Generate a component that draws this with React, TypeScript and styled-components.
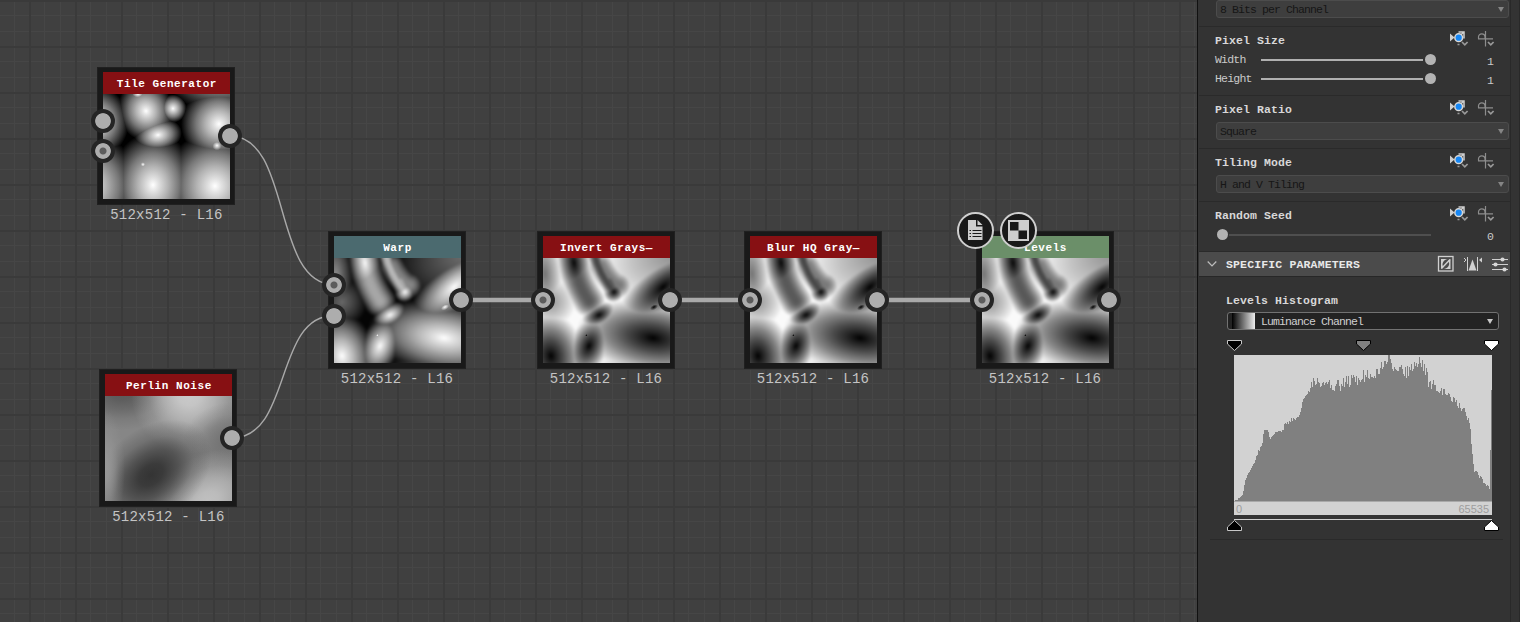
import React from "react";
import styled, { createGlobalStyle } from "styled-components";

const GlobalStyle = createGlobalStyle`
  * { box-sizing: border-box; }
  html, body { margin: 0; padding: 0; }
  body { background: #404040; overflow: hidden; }
`;

const mono = `"Liberation Mono", monospace`;

const Shell = styled.div`
  display: flex;
  width: 1520px;
  height: 622px;
  overflow: hidden;
  font-family: ${mono};
`;

/* ---------- graph canvas ---------- */

const Canvas = styled.main`
  position: relative;
  flex: 1;
  overflow: hidden;
  background-color: #404040;
  background-image:
    linear-gradient(to right, #3a3a3a 2px, transparent 2px),
    linear-gradient(to bottom, #3a3a3a 2px, transparent 2px),
    linear-gradient(to right, transparent 15px, #464646 15px, #464646 16px, transparent 16px, transparent 31px, #464646 31px, #464646 32px, transparent 32px),
    linear-gradient(to bottom, transparent 15px, #464646 15px, #464646 16px, transparent 16px, transparent 31px, #464646 31px, #464646 32px, transparent 32px);
  background-size: 46px 46px;
  background-position: 29px 0;
`;

const Wires = styled.svg`
  position: absolute;
  inset: 0;
`;

const NodeBox = styled.div<{ $x: number; $y: number }>`
  position: absolute;
  left: ${(p) => p.$x}px;
  top: ${(p) => p.$y}px;
  width: 138px;
  height: 138px;
  padding: 4px 4px 5px 5px;
  border: 1px solid #202020;
  background: #191919;
`;

const NodeHeader = styled.div<{ $color: string }>`
  height: 22px;
  background: ${(p) => p.$color};
  color: #fff;
  font-weight: 700;
  font-size: 11px;
  line-height: 24px;
  letter-spacing: 0.55px;
  text-align: center;
  white-space: pre;
`;

const Thumb = styled.svg<{ $invert?: boolean }>`
  display: block;
  width: 127px;
  height: 105px;
  isolation: isolate;
  filter: ${(p) => (p.$invert ? "invert(1)" : "none")};
`;

const Port = styled.i<{ $side: "in" | "out"; $y: number; $dot?: boolean }>`
  position: absolute;
  left: ${(p) => (p.$side === "in" ? -7.5 : 119.5)}px;
  top: ${(p) => p.$y - 13}px;
  width: 24px;
  height: 24px;
  border-radius: 50%;
  background: ${(p) =>
    p.$dot
      ? "radial-gradient(circle, #5c5c5c 3px, #adadad 4px, #adadad 7.4px, #252525 8.2px)"
      : "radial-gradient(circle, #adadad 7.4px, #252525 8.2px)"};
`;

const NodeLabel = styled.div`
  position: absolute;
  top: 139px;
  left: -10px;
  right: -10px;
  color: #c4c4c4;
  font-size: 14px;
  line-height: 17px;
  letter-spacing: 0.25px;
  text-align: center;
  white-space: pre;
`;

const Badge = styled.div<{ $x: number }>`
  position: absolute;
  left: ${(p) => p.$x}px;
  top: 212px;
  width: 37px;
  height: 37px;
  border: 2px solid #cfcfcf;
  border-radius: 50%;
  background: #191919;
  svg { display: block; margin: 6px; }
`;

/* Cone-like falloff shared by the textures; the focal point can be pulled off centre. */
type BumpProps = {
  id: string; x: number; y: number; rx: number; ry: number;
  rot?: number; fx?: number; fy?: number; peak?: number;
};

const Bump = ({ id, x, y, rx, ry, rot = 0, fx = 0.5, fy = 0.5, peak = 255 }: BumpProps) => {
  const g = (k: number) => {
    const v = Math.round(peak * k);
    return `rgb(${v},${v},${v})`;
  };
  return (
    <g transform={`translate(${x} ${y}) rotate(${rot})`} style={{ mixBlendMode: "lighten" }}>
      <radialGradient id={id} fx={fx} fy={fy}>
        <stop offset="0" stopColor={g(1)} />
        <stop offset=".12" stopColor={g(0.89)} />
        <stop offset=".35" stopColor={g(0.7)} />
        <stop offset=".6" stopColor={g(0.47)} />
        <stop offset=".82" stopColor={g(0.22)} />
        <stop offset="1" stopColor={g(0)} />
      </radialGradient>
      <ellipse rx={rx} ry={ry} fill={`url(#${id})`} />
    </g>
  );
};

const Ridge = ({ d, width, peak }: { d: string; width: number; peak: number }) => (
  <g style={{ mixBlendMode: "lighten" }} fill="none" strokeLinecap="round">
    {Array.from({ length: 20 }, (_, i) => {
      const v = Math.round(peak * Math.sin((((i + 1) / 20) * Math.PI) / 2));
      return <path key={i} d={d} stroke={`rgb(${v},${v},${v})`} strokeWidth={width * (1 - i / 20)} />;
    })}
  </g>
);

const TileTexture = () => (
  <Thumb viewBox="0 0 127 105" preserveAspectRatio="none">
    <rect width="127" height="105" fill="#000" />
    <Bump id="t1" x={50} y={91} rx={43} ry={53} />
    <Bump id="t2" x={112} y={92} rx={52} ry={55} />
    <Bump id="t3" x={-15} y={92} rx={52} ry={53} />
    <Bump id="t4" x={116} y={30} rx={38} ry={38} />
    <Bump id="t5" x={-8} y={28} rx={34} ry={36} />
    <Bump id="t6" x={43} y={17} rx={28} ry={31} rot={-20} />
    <Bump id="t7" x={116} y={-35} rx={60} ry={54} />
    <Bump id="t8" x={55} y={41} rx={24} ry={17} rot={-10} />
    <Bump id="t9" x={70} y={14.5} rx={13.5} ry={14} />
    <Bump id="t10" x={114} y={51.5} rx={7.5} ry={7} />
    <Bump id="t11" x={40} y={70.5} rx={4.5} ry={4.5} />
    <Bump id="t12" x={35} y={0} rx={8} ry={6} />
  </Thumb>
);

const WarpTexture = ({ id, invert }: { id: string; invert?: boolean }) => (
  <Thumb viewBox="0 0 127 105" preserveAspectRatio="none" $invert={invert}>
    <filter id={`${id}soft`} x="-5%" y="-5%" width="110%" height="110%" colorInterpolationFilters="sRGB">
      <feGaussianBlur stdDeviation="1.3" />
    </filter>
    <rect width="127" height="105" fill="#000" />
    <g filter={`url(#${id}soft)`}>
      <rect x="-20" y="-20" width="167" height="145" fill="#050505" />
      <Bump id={`${id}a`} x={140} y={-8} rx={88} ry={52} rot={-18} peak={125} />
      <Bump id={`${id}b`} x={2} y={16} rx={18} ry={44} rot={-4} peak={140} />
      <Bump id={`${id}c`} x={8} y={44} rx={26} ry={26} rot={20} peak={105} />
      <Bump id={`${id}d`} x={120} y={29} rx={56} ry={25} rot={-40} />
      <Bump id={`${id}e`} x={110} y={80} rx={78} ry={38} rot={9} />
      <Bump id={`${id}f`} x={125} y={112} rx={74} ry={38} rot={0} peak={130} />
      <Bump id={`${id}g`} x={46} y={88} rx={20} ry={33} rot={22} />
      <Bump id={`${id}h`} x={8} y={98} rx={34} ry={46} rot={-10} />
      <Ridge d="M31 -10 C30 14 36 28 46 43" width={33} peak={168} />
      <Bump id={`${id}i`} x={31} y={5} rx={17} ry={40} rot={-8} peak={250} />
      <Ridge d="M51 -6 C54 10 62 22 70 33" width={15} peak={185} />
      <Ridge d="M58 8 C62 16 70 26 76 27" width={27} peak={135} />
      <Ridge d="M66 24 L71 34" width={19} peak={175} />
      <Bump id={`${id}j`} x={71} y={34} rx={11} ry={10} rot={-40} peak={255} />
      <Bump id={`${id}k`} x={56} y={57} rx={19} ry={11.5} rot={-28} />
    </g>
    <Bump id={`${id}l`} x={111} y={49} rx={8} ry={4.5} rot={-28} />
    <Bump id={`${id}m`} x={43.5} y={77.3} rx={3} ry={2.5} rot={-30} />
  </Thumb>
);

const Cloud = ({ id, x, y, rx, ry, rot = 0, color }: { id: string; x: number; y: number; rx: number; ry: number; rot?: number; color: string }) => (
  <g transform={`translate(${x} ${y}) rotate(${rot})`}>
    <radialGradient id={id}>
      <stop offset="0" stopColor={color} />
      <stop offset=".2" stopColor={color} stopOpacity=".92" />
      <stop offset=".45" stopColor={color} stopOpacity=".62" />
      <stop offset=".7" stopColor={color} stopOpacity=".25" />
      <stop offset="1" stopColor={color} stopOpacity="0" />
    </radialGradient>
    <ellipse rx={rx} ry={ry} fill={`url(#${id})`} />
  </g>
);

const PerlinTexture = () => (
  <Thumb viewBox="0 0 127 105" preserveAspectRatio="none">
    <rect width="127" height="105" fill="#868686" />
    <Cloud id="p1" x={17} y={-4} rx={58} ry={38} color="#5a5a5a" />
    <Cloud id="p2" x={84} y={-2} rx={58} ry={60} rot={-10} color="#cacaca" />
    <Cloud id="p3" x={128} y={46} rx={50} ry={40} color="#727272" />
    <Cloud id="p5" x={102} y={106} rx={64} ry={46} rot={-35} color="#c0c0c0" />
    <Cloud id="p4" x={46} y={79} rx={68} ry={46} rot={-38} color="#343434" />
    <Cloud id="p6" x={0} y={74} rx={20} ry={60} color="#989898" />
  </Thumb>
);

type NodeSpec = {
  x: number; y: number; title: string; color: string; art: React.ReactNode;
  ins: { y: number; dot?: boolean }[];
};

const RED = "#871013";

const nodes: NodeSpec[] = [
  { x: 97.4, y: 67, title: "Tile Generator", color: RED, art: <TileTexture />, ins: [{ y: 53.5 }, { y: 84, dot: true }] },
  { x: 99.4, y: 369.4, title: "Perlin Noise", color: RED, art: <PerlinTexture />, ins: [] },
  { x: 328, y: 231, title: "Warp", color: "#4b6a6f", art: <WarpTexture id="w" />, ins: [{ y: 53.5, dot: true }, { y: 84.5 }] },
  { x: 537, y: 231, title: "Invert Grays—", color: RED, art: <WarpTexture id="i" invert />, ins: [{ y: 69, dot: true }] },
  { x: 744, y: 231, title: "Blur HQ Gray—", color: RED, art: <WarpTexture id="b" invert />, ins: [{ y: 69, dot: true }] },
  { x: 976, y: 231, title: "Levels", color: "#6b8f69", art: <WarpTexture id="l" invert />, ins: [{ y: 69, dot: true }] },
];

const GraphNode = ({ x, y, title, color, art, ins }: NodeSpec) => (
  <NodeBox $x={x} $y={y}>
    <NodeHeader $color={color}>{title}</NodeHeader>
    {art}
    {ins.map((p) => <Port key={p.y} $side="in" $y={p.y} $dot={p.dot} />)}
    <Port $side="out" $y={69} />
    <NodeLabel>512x512 - L16</NodeLabel>
  </NodeBox>
);

/* ---------- parameter panel ---------- */

const Panel = styled.aside`
  display: flex;
  width: 323px;
  border-left: 1px solid #111;
  background: #333;
  color: #d0d0d0;
`;

const Params = styled.div`
  width: 312px;
  padding-left: 1px;
`;

const ScrollGutter = styled.div`
  width: 10px;
  border-left: 1px solid #292929;
  border-right: 1px solid #292929;
`;

const Section = styled.section<{ $h: number }>`
  height: ${(p) => p.$h}px;
  border-bottom: 1px solid #2a2a2a;
  padding: 0 1px 0 16px;
`;

const TitleRow = styled.div`
  display: flex;
  align-items: flex-start;
  justify-content: space-between;
  height: 26px;
  padding: 3px 14px 0 0;
`;

const Title = styled.h3`
  margin: 0;
  padding-top: 2px;
  color: #d8d8d8;
  font-size: 11.5px;
  font-weight: 700;
  line-height: 18px;
  letter-spacing: 0.1px;
`;

const Select = styled.div`
  display: flex;
  align-items: center;
  justify-content: space-between;
  height: 18px;
  margin-left: 1px;
  padding: 0 4px 0 3px;
  border: 1px solid #4c4c4c;
  border-radius: 3px;
  background: #3e3e3e;
  color: #161616;
  font-size: 11.5px;
  letter-spacing: -0.9px;
`;

const Caret = styled.i<{ $color: string }>`
  border: 3px solid transparent;
  border-top: 5px solid ${(p) => p.$color};
  border-bottom: 0;
`;

const SliderGroup = styled.div`
  margin-top: -3px;
`;

const SliderRow = styled.div`
  display: flex;
  align-items: center;
  height: 19px;
  font-size: 11.5px;
  letter-spacing: -0.8px;
`;

const SliderName = styled.span`
  width: 46px;
  color: #cacaca;
`;

const Track = styled.span<{ $w: number; $color: string }>`
  width: ${(p) => p.$w}px;
  height: 2px;
  background: ${(p) => p.$color};
`;

const Knob = styled.span`
  width: 11px;
  height: 11px;
  margin: 0 1.5px;
  border-radius: 50%;
  background: #b3b3b3;
`;

const Value = styled.span`
  margin-left: auto;
  padding: 3px 16px 0 0;
  color: #cacaca;
`;

const GroupHeader = styled.header`
  display: flex;
  align-items: center;
  height: 25px;
  padding: 0 1px 0 8px;
  border-bottom: 1px solid #272727;
  background: #4b4b4b;
  color: #e8e8e8;
  h2 {
    flex: 1;
    margin: 0 0 0 9px;
    font-size: 11.5px;
    font-weight: 700;
    letter-spacing: 0.15px;
  }
`;

const HistogramGroup = styled.div`
  margin: 0 7px 0 11px;
  height: 263px;
  padding: 13px 4px 0 16px;
  border-bottom: 1px solid #2a2a2a;
`;

const ChannelSelect = styled.div`
  display: flex;
  align-items: center;
  width: 272px;
  height: 18px;
  margin: 2px 0 0 1px;
  padding: 0 5px 0 4px;
  border: 1px solid #727272;
  border-radius: 3px;
  background: #232323;
  color: #d0d0d0;
  font-size: 11.5px;
  letter-spacing: -0.9px;
  span { flex: 1; }
`;

const Ramp = styled.i`
  width: 23px;
  height: 16px;
  margin-right: 6px;
  background: linear-gradient(to right, #000, #eee);
`;

const HandleRow = styled.div<{ $gap: number }>`
  display: flex;
  justify-content: space-between;
  width: 272px;
  margin: ${(p) => p.$gap}px 0 0 1px;
  svg { display: block; }
`;

const Plot = styled.div`
  width: 258px;
  height: 160px;
  margin: 4px 0 0 8px;
  background: #d2d2d2;
  svg { display: block; }
`;

const Axis = styled.div`
  display: flex;
  justify-content: space-between;
  padding: 0 3px 0 2px;
  color: #9d9d9d;
  font-family: "Liberation Sans", sans-serif;
  font-size: 11px;
  line-height: 15px;
`;

const OutputBar = styled.div`
  width: 258px;
  height: 1px;
  margin: 4px 0 0 8px;
  background: #cfcfcf;
`;

const RowIcons = () => (
  <svg width="45" height="18" viewBox="0 0 45 18" fill="none">
    <path d="M0 3.500L4.500 7.500L0 11.500Z" fill="#cfcfcf" />
    <path d="M8.500 2H14V8.500M10 5.500L14 2" stroke="#cfcfcf" strokeWidth="1.500" />
    <circle cx="8.700" cy="7.700" r="4.600" fill="#d8d8d8" />
    <circle cx="8.700" cy="7.700" r="3.100" fill="#1687f5" />
    <path d="M7.500 14.500h2M12 12l2.800 2.800 2.800-2.800" stroke="#999" strokeWidth="1.700" />
    <path d="M28.500 8.500V7C28.500 2.700 35 2.700 35 7V8.500M28 8.800H43M35.500 1V16.500" stroke="#8d8d8d" strokeWidth="1.200" />
    <path d="M38 12l2.800 2.800 2.800-2.800" stroke="#999" strokeWidth="1.700" />
  </svg>
);

const ParamTitle = ({ children }: { children: React.ReactNode }) => (
  <TitleRow>
    <Title>{children}</Title>
    <RowIcons />
  </TitleRow>
);

/* Histogram outline: [column, height] knots, interpolated per column with comb noise. */
const knots: [number, number][] = [
  [0, 0], [8, 5], [11, 21], [16, 31], [21, 41], [24, 49], [28, 57], [30, 72], [33, 70], [36, 62], [40, 68],
  [45, 71], [49, 69], [50, 76], [56, 80], [62, 83], [66, 88], [68, 101], [72, 106], [75, 111], [81, 121],
  [86, 114], [94, 114], [105, 115], [119, 121], [130, 124], [143, 129], [150, 136], [153, 141], [154, 146],
  [156, 146], [157, 133], [172, 129], [180, 132], [185, 140], [189, 135], [194, 120], [200, 113], [212, 107],
  [222, 98], [230, 89], [235, 79], [236, 70], [238, 45], [240, 31], [246, 24], [252, 15], [255, 13],
];

const heightAt = (c: number) => {
  if (c === 256) return 51;
  if (c === 257) return 111;
  const i = Math.max(1, knots.findIndex(([x]) => x >= c));
  const [x0, y0] = knots[i - 1];
  const [x1, y1] = knots[i];
  const base = y0 + ((y1 - y0) * (c - x0)) / (x1 - x0);
  const s = Math.sin(c * 127.1 + 11.7) * 43758.5453;
  const noise = s - Math.floor(s) - 0.45;
  const amp = c < 20 ? 1.5 : c < 75 ? 4 : c < 200 ? 13 : c < 236 ? 8 : 4;
  return Math.max(0, Math.min(146, Math.round(base + noise * amp)));
};

const histPath =
  "M0 146" + Array.from({ length: 258 }, (_, c) => `V${146 - heightAt(c)}H${c + 1}`).join("") + "V146Z";

const Handle = ({ fill, stroke, up }: { fill: string; stroke: string; up?: boolean }) => (
  <svg width="15" height="11" viewBox="0 0 15 11">
    <path
      d={up ? "M7.500 .5L14.500 7V10.500H.5V7Z" : "M.5 .5H14.500V4L7.500 10.500L.5 4Z"}
      fill={fill}
      stroke={stroke}
    />
  </svg>
);

const App = () => (
  <>
    <GlobalStyle />
    <Shell>
      <Canvas>
        <Wires width="1197" height="622" fill="none">
          <g stroke="#a9a9a9" strokeWidth="1.4">
            <path d="M230 136C292 136 272 284.500 334 284.500" />
            <path d="M232 438C292 438 274 315.500 334 315.500" />
          </g>
          <path d="M460 300H543M669 300H750M876 300H982" stroke="#a9a9a9" strokeWidth="4.500" />
        </Wires>
        {nodes.map((n) => <GraphNode key={n.title} {...n} />)}
        <Badge $x={957.4}>
          <svg width="21" height="21" viewBox="0 0 21 21">
            <path d="M3 0H11V6.500H17.500V20H3Z" fill="#cdcdcd" />
            <path d="M12.500 0L17.500 5H12.500Z" fill="#cdcdcd" />
            <path d="M4.500 10.500h1.500M7.500 10.500h9M4.500 13.500h1.500M7.500 13.500h9M4.500 16.500h1.500M7.500 16.500h9" stroke="#191919" strokeWidth="1.200" />
          </svg>
        </Badge>
        <Badge $x={1000.4}>
          <svg width="21" height="21" viewBox="0 0 21 21">
            <rect width="21" height="21" fill="#cdcdcd" />
            <path d="M2 2h8.500v8.500H2zM10.500 10.500H19V19h-8.500z" fill="#191919" />
          </svg>
        </Badge>
      </Canvas>

      <Panel>
        <Params>
          <Section $h={27}>
            <Select>8 Bits per Channel<Caret $color="#858585" /></Select>
          </Section>
          <Section $h={69}>
            <ParamTitle>Pixel Size</ParamTitle>
            <SliderGroup>
              {["Width", "Height"].map((name) => (
                <SliderRow key={name}>
                  <SliderName>{name}</SliderName>
                  <Track $w={162} $color="#b0b0b0" />
                  <Knob />
                  <Value>1</Value>
                </SliderRow>
              ))}
            </SliderGroup>
          </Section>
          <Section $h={53}>
            <ParamTitle>Pixel Ratio</ParamTitle>
            <Select>Square<Caret $color="#858585" /></Select>
          </Section>
          <Section $h={53}>
            <ParamTitle>Tiling Mode</ParamTitle>
            <Select>H and V Tiling<Caret $color="#858585" /></Select>
          </Section>
          <Section $h={50}>
            <ParamTitle>Random Seed</ParamTitle>
            <SliderGroup>
              <SliderRow>
                <Knob />
                <Track $w={202} $color="#4f4f4f" />
                <Value>0</Value>
              </SliderRow>
            </SliderGroup>
          </Section>
          <GroupHeader>
            <svg width="10" height="8" viewBox="0 0 10 8" fill="none" stroke="#bdbdbd" strokeWidth="1.2">
              <path d="M.7 1.500L5 6L9.300 1.500" />
            </svg>
            <h2>SPECIFIC PARAMETERS</h2>
            <svg width="72" height="18" viewBox="0 0 72 18" fill="none" stroke="#d0d0d0">
              <rect x="1.500" y="1.500" width="14.500" height="14.500" strokeWidth="1.300" />
              <path d="M4 14V4H10.500C6 5 4.300 9.500 6.500 12ZM13.500 4V14H7C12 13 13.500 8.500 11 6Z" fill="#d0d0d0" stroke="none" />
              <path d="M4.500 13.500L13 4.500" strokeWidth="1.400" />
              <path d="M30.500 2V16M40.500 2V16" />
              <path d="M31.500 15.500L35.500 4.500L39.500 15.500Z" fill="#d0d0d0" stroke="none" />
              <path d="M27 3L29 5L27 7" />
              <path d="M45 2.500V7.500L42 5Z" fill="#d0d0d0" stroke="none" />
              <path d="M55 4.500H71M55 9.500H71M55 14.500H71" strokeWidth="1.200" />
              <g fill="#d8d8d8" stroke="none">
                <circle cx="65.500" cy="4.500" r="2.100" />
                <circle cx="58.500" cy="9.500" r="2.100" />
                <circle cx="67.500" cy="14.500" r="2.100" />
              </g>
            </svg>
          </GroupHeader>
          <HistogramGroup>
            <Title>Levels Histogram</Title>
            <ChannelSelect>
              <Ramp />
              <span>Luminance Channel</span>
              <Caret $color="#c8c8c8" />
            </ChannelSelect>
            <HandleRow $gap={10}>
              <Handle fill="#000" stroke="#c8c8c8" />
              <Handle fill="#808080" stroke="#000" />
              <Handle fill="#fff" stroke="#000" />
            </HandleRow>
            <Plot>
              <svg width="258" height="147" shapeRendering="crispEdges">
                <path d={histPath} fill="#808080" />
                <rect y="146" width="258" height="1" fill="#a9a9a9" />
              </svg>
              <Axis><span>0</span><span>65535</span></Axis>
            </Plot>
            <OutputBar />
            <HandleRow $gap={0}>
              <Handle fill="#000" stroke="#c8c8c8" up />
              <Handle fill="#fff" stroke="#000" up />
            </HandleRow>
          </HistogramGroup>
        </Params>
        <ScrollGutter />
      </Panel>
    </Shell>
  </>
);

export default App;
